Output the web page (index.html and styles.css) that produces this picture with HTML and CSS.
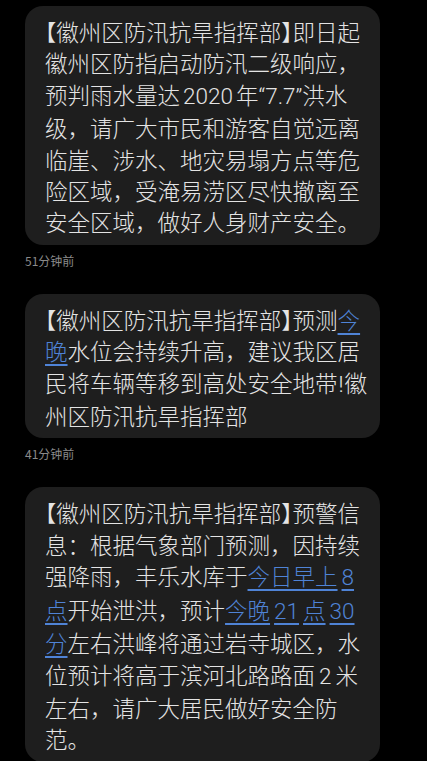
FILE: index.html
```html
<!DOCTYPE html>
<html lang="zh-CN">
<head>
<meta charset="utf-8">
<link rel="stylesheet" href="styles.css">
</head>
<body>
<div class="thread">
  <div class="msg">
    <div class="bubble">
      <span class="line"><span class="br">【</span>徽州区防汛抗旱指挥部<span class="br">】</span>即日起</span>
      <span class="line">徽州区防指启动防汛二级响应，</span>
      <span class="line">预判雨水量达<span class="num">2020</span>年<span class="num tight">“7.7”</span>洪水</span>
      <span class="line">级，请广大市民和游客自觉远离</span>
      <span class="line">临崖、涉水、地灾易塌方点等危</span>
      <span class="line">险区域，受淹易涝区尽快撤离至</span>
      <span class="line">安全区域，做好人身财产安全。</span>
    </div>
    <div class="time">51分钟前</div>
  </div>
  <div class="msg">
    <div class="bubble">
      <span class="line"><span class="br">【</span>徽州区防汛抗旱指挥部<span class="br">】</span>预测<span class="link">今</span></span>
      <span class="line"><span class="link">晚</span>水位会持续升高，建议我区居</span>
      <span class="line">民将车辆等移到高处安全地带<span class="num bang">!</span>徽</span>
      <span class="line">州区防汛抗旱指挥部</span>
    </div>
    <div class="time">41分钟前</div>
  </div>
  <div class="msg">
    <div class="bubble">
      <span class="line"><span class="br">【</span>徽州区防汛抗旱指挥部<span class="br">】</span>预警信</span>
      <span class="line">息：根据气象部门预测，因持续</span>
      <span class="line">强降雨，丰乐水库于<span class="link">今日早上<span class="num sp">8</span></span></span>
      <span class="line"><span class="link">点</span>开始泄洪，预计<span class="link">今晚<span class="num sp">21</span>点<span class="num sp">30</span></span></span>
      <span class="line"><span class="link">分</span>左右洪峰将通过岩寺城区，水</span>
      <span class="line">位预计将高于滨河北路路面<span class="num sp">2</span>米</span>
      <span class="line">左右，请广大居民做好安全防</span>
      <span class="line">范。</span>
    </div>
  </div>
</div>
</body>
</html>
```
FILE: styles.css
```css
html, body {
  margin: 0;
  padding: 0;
  background: #000;
}
body {
  font-family: "Noto Sans CJK SC", "Noto Sans", sans-serif;
  width: 427px;
  height: 761px;
  overflow: hidden;
}
.thread {
  display: flex;
  flex-direction: column;
  gap: 26px;
  padding: 6px 0 0 25px;
}
.msg {
  display: flex;
  flex-direction: column;
  gap: 9px;
}
.bubble {
  width: 315px;
  padding: 10px 20px 7px 20px;
  background: #1e1e1e;
  border-radius: 18px;
  color: #e4e4e4;
  font-size: 22.5px;
  font-weight: 300;
  line-height: 31.4px;
  display: flex;
  flex-direction: column;
}
.line {
  display: block;
  white-space: nowrap;
}
.br {
  font-feature-settings: "halt";
}
.num {
  font-family: "Roboto", "Noto Sans", sans-serif;
  padding: 0 3px;
}
.tight {
  padding: 0;
}
.bang {
  padding: 0 1px;
}
.sp {
  padding: 0 4px;
}
.link {
  color: #4f83d6;
  text-decoration: underline;
  text-underline-offset: 4px;
  text-decoration-thickness: 1.5px;
}
.time {
  color: #8a8a8a;
  font-size: 12px;
  line-height: 14px;
}
```
